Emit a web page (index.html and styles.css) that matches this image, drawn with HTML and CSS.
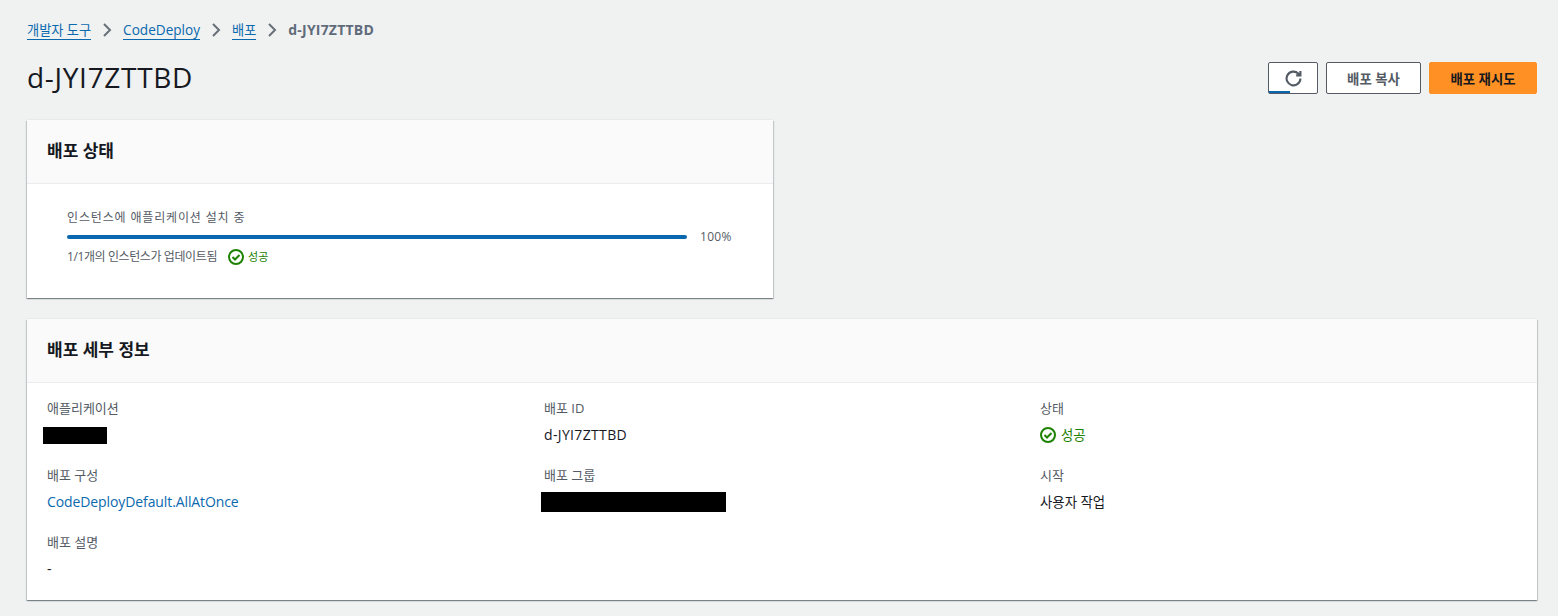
FILE: index.html
```html
<!DOCTYPE html>
<html lang="ko">
<head>
<meta charset="utf-8">
<title>d-JYI7ZTTBD</title>
<link rel="stylesheet" href="styles.css">
</head>
<body>
<main class="page">
  <nav class="crumbs">
    <a class="crumb crumb-ko" href="#">개발자 도구</a>
    <svg class="sep" viewBox="0 0 16 16"><path d="M5 2l6 6-6 6"/></svg>
    <a class="crumb" href="#">CodeDeploy</a>
    <svg class="sep" viewBox="0 0 16 16"><path d="M5 2l6 6-6 6"/></svg>
    <a class="crumb crumb-ko" href="#">배포</a>
    <svg class="sep" viewBox="0 0 16 16"><path d="M5 2l6 6-6 6"/></svg>
    <span class="crumb-current">d-JYI7ZTTBD</span>
  </nav>
  <header class="head">
    <h1 class="title">d-JYI7ZTTBD</h1>
    <div class="actions">
      <button class="btn btn-icon">
        <svg class="refresh" viewBox="0 0 16 16"><path d="M14.5 8a6.5 6.5 0 1 1-2-4.7L14.5 5M14.5 1v4h-4"/></svg>
        <span class="btn-progress"></span>
      </button>
      <button class="btn btn-copy">배포 복사</button>
      <button class="btn btn-primary">배포 재시도</button>
    </div>
  </header>
  <div class="top-grid">
    <section class="card">
      <h2 class="card-head">배포 상태</h2>
      <div class="status-body">
        <div class="prog-label">인스턴스에 애플리케이션 설치 중</div>
        <div class="prog-row">
          <div class="prog-track"></div>
          <span class="prog-val">100%</span>
        </div>
        <div class="prog-note">
          <span>1/1개의 인스턴스가 업데이트됨</span>
          <span class="ok ok-small">
            <svg class="ok-icon" viewBox="0 0 16 16"><circle cx="8" cy="8" r="7"/><path d="M4.5 8l2.5 2.5 4.5-4.5"/></svg>성공
          </span>
        </div>
      </div>
    </section>
  </div>
  <section class="card">
    <h2 class="card-head">배포 세부 정보</h2>
    <div class="details">
      <div class="item"><div class="key">애플리케이션</div><div class="val"><span class="redact redact-app"></span></div></div>
      <div class="item"><div class="key">배포 ID</div><div class="val val-id">d-JYI7ZTTBD</div></div>
      <div class="item"><div class="key">상태</div><div class="val val-ko ok"><svg class="ok-icon" viewBox="0 0 16 16"><circle cx="8" cy="8" r="7"/><path d="M4.5 8l2.5 2.5 4.5-4.5"/></svg>성공</div></div>
      <div class="item"><div class="key">배포 구성</div><div class="val"><a class="link" href="#">CodeDeployDefault.AllAtOnce</a></div></div>
      <div class="item"><div class="key">배포 그룹</div><div class="val"><span class="redact redact-group"></span></div></div>
      <div class="item"><div class="key">시작</div><div class="val val-ko">사용자 작업</div></div>
      <div class="item"><div class="key">배포 설명</div><div class="val">-</div></div>
    </div>
  </section>
</main>
</body>
</html>
```

FILE: styles.css
```css
* { box-sizing: border-box; }
html, body { margin: 0; height: 616px; overflow: hidden; }
body {
  background: #f0f1f1;
  color: #16191f;
  font-family: "Open Sans", "Noto Sans CJK KR", sans-serif;
  font-size: 14px;
}
.page { padding: 20px 21px 0 27px; }
.crumbs { display: flex; align-items: center; height: 20px; font-size: 13.6px; line-height: 20px; }
.crumb { color: #0a69ae; text-decoration: none; border-bottom: 1px solid #0a69ae; line-height: 18px; margin-top: 1px; }
.crumb-ko { font-size: 13.2px; }
.crumb-current { color: #5f6b7a; font-weight: 700; font-size: 14px; letter-spacing: .2px; }
.sep { width: 16px; height: 16px; margin: 0 8px; fill: none; stroke: #687078; stroke-width: 2; }
.head { display: flex; justify-content: space-between; align-items: center; height: 50px; margin-top: 12px; margin-bottom: 18px; }
.title { margin: 0; font-size: 28px; font-weight: 400; line-height: 50px; letter-spacing: .7px; }
.actions { display: flex; gap: 8px; padding-top: 2px; }
.btn {
  height: 32px; margin: 0; padding: 0; position: relative;
  border: 1px solid #545b64; border-radius: 2px; background: #fff;
  color: #545b64; font: 700 13.4px "Open Sans", "Noto Sans CJK KR", sans-serif;
}
.btn-icon { width: 50px; display: flex; align-items: center; justify-content: center; }
.btn-copy { width: 95px; }
.btn-primary { width: 108px; background: #ff9023; border-color: #ff9023; color: #16191f; }
.refresh { width: 17px; height: 17px; fill: none; stroke: #545b64; stroke-width: 2; }
.btn-progress { position: absolute; left: 0; bottom: 0; width: 21px; height: 2px; background: #0a69ae; }
.top-grid { display: grid; grid-template-columns: 746px 1fr; margin-bottom: 21px; }
.card { background: #fff; box-shadow: 0 1px 1px 0 rgba(0, 28, 36, .3), 1px 1px 1px 0 rgba(0, 28, 36, .15), -1px 1px 1px 0 rgba(0, 28, 36, .15), 0 -1px 0 0 rgba(0, 28, 36, .03); }
.card-head {
  margin: 0; height: 64px; padding: 0 20px 1px; display: flex; align-items: center;
  background: #fafafa; border-bottom: 1px solid #eaeded;
  font-size: 17px; font-weight: 700; line-height: 22px;
}
.status-body { height: 114px; padding: 24px 40px 0; font-size: 12px; line-height: 20px; color: #545b64; }
.prog-label { height: 19px; letter-spacing: .85px; }
.prog-row { display: flex; align-items: center; height: 20px; }
.prog-track { width: 620px; height: 4px; border-radius: 2px; background: #0a69ae; }
.prog-val { margin-left: 13px; letter-spacing: .3px; }
.prog-note { display: flex; align-items: center; gap: 11px; height: 20px; letter-spacing: -.4px; }
.ok { color: #1d8102; display: flex; align-items: center; gap: 5px; }
.ok-small { gap: 4px; font-size: 11px; letter-spacing: 0; }
.ok-icon { width: 16px; height: 16px; fill: none; stroke: #1d8102; stroke-width: 2; flex: none; }
.details {
  display: grid; grid-template-columns: 497px 496px 1fr; align-content: start; row-gap: 15px;
  height: 217px; padding: 15px 20px 0;
}
.item { height: 52px; }
.key { color: #545b64; font-size: 13px; height: 22px; line-height: 20px; }
.val { font-size: 14px; height: 30px; line-height: 30px; display: flex; align-items: center; }
.val-id { letter-spacing: .35px; }
.val-ko { font-size: 13.4px; }
.link { color: #0a69ae; text-decoration: none; letter-spacing: -.1px; }
.redact { display: block; background: #000; }
.redact-app { width: 64px; height: 17px; margin-left: -4px; }
.redact-group { width: 185px; height: 20px; margin-left: -3px; }
```
